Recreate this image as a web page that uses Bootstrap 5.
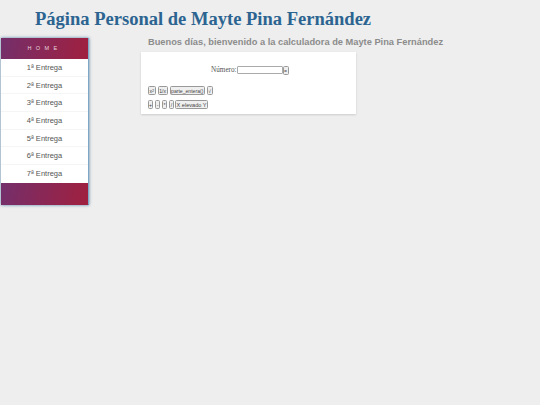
<!DOCTYPE html>
<html lang="es">
<head>
<meta charset="utf-8">
<title>Página Personal de Mayte Pina Fernández</title>
<link rel="stylesheet" href="https://cdn.jsdelivr.net/npm/bootstrap@5.3.0/dist/css/bootstrap.min.css">
<style>
html,body{height:100%}
body{background:#eee;font-family:"Liberation Sans",Arial,sans-serif;overflow:hidden}
.page-title{font-family:"Liberation Serif","Times New Roman",serif;font-weight:700;font-size:18.55px;line-height:22px;color:#2c6491;margin:0;padding:8px 0 0 35px;height:36px}
.side-menu{width:88px;margin:2px 0 0 1px;height:167px;background:#fff;box-shadow:0 0 3px rgba(30,90,140,.75);border-right:1px solid #7fa6c4;border-bottom:1px solid #4f7fa6;flex:none}
.menu-band{background:linear-gradient(100deg,#742f6b,#a0203f);color:#e6d5dd;height:21px;font-size:5.5px;letter-spacing:4.4px;line-height:21px;text-align:center}
.menu-foot{height:22px;background:linear-gradient(100deg,#742f6b,#a0203f)}
.menu-link{display:block;height:17.7px;line-height:17px;text-align:center;font-size:7.5px;color:#555;text-decoration:none;border-bottom:1px solid #f5f5f5}
.menu-link:last-of-type{border-bottom:0}
.main-col{margin-left:52px;width:215px;flex:none}
.greet{font-weight:700;font-size:9.29px;line-height:12px;color:#8c8c8c;padding:0 0 4px 7px;white-space:nowrap;margin:0;height:16px}
.calc-panel{background:#fff;height:62px;box-shadow:0 1px 2px rgba(0,0,0,.15);padding:13px 7px 0;font-size:6px}
.num-row{font-family:"Liberation Serif",serif;font-size:7.2px;color:#555;height:10px;margin-bottom:11px;padding-left:63px}
.num-box{width:46px;height:8px;border:1px solid #aaa;border-radius:1px;background:#fff;padding:0;display:block}
.calc-btn{font-family:"Liberation Sans",sans-serif;font-size:5.1px;line-height:6px;color:#444;background:#efefef;border:1px solid #999;border-radius:1.5px;padding:1px .5px;height:9px;display:block}
.calc-btn.op-key{width:5px;padding:1px 0}
.calc-btn.wide-key{font-size:5.6px;margin-left:-1px}
.calc-row{height:9px;margin-bottom:5px;gap:2px}
sup.pow{font-size:4px;top:-.3em}
</style>
</head>
<body>
<h1 class="page-title">Página Personal de Mayte Pina Fernández</h1>
<div class="d-flex">
  <nav class="side-menu">
    <div class="menu-band">HOME</div>
    <a class="menu-link" href="#">1ª Entrega</a>
    <a class="menu-link" href="#">2ª Entrega</a>
    <a class="menu-link" href="#">3ª Entrega</a>
    <a class="menu-link" href="#">4ª Entrega</a>
    <a class="menu-link" href="#">5ª Entrega</a>
    <a class="menu-link" href="#">6ª Entrega</a>
    <a class="menu-link" href="#">7ª Entrega</a>
    <div class="menu-foot"></div>
  </nav>
  <main class="main-col">
    <p class="greet">Buenos días, bienvenido a la calculadora de Mayte Pina Fernández</p>
    <div class="calc-panel">
      <div class="num-row d-flex align-items-center"><span>Número:</span><input class="num-box" type="text" aria-label="Número"><button class="calc-btn" type="button">=</button></div>
      <div class="calc-row d-flex align-items-center">
        <button class="calc-btn" type="button">x<sup class="pow">2</sup></button>
        <button class="calc-btn" type="button">1/x</button>
        <button class="calc-btn" type="button">parte_entera()</button>
        <button class="calc-btn" type="button">√</button>
      </div>
      <div class="calc-row d-flex align-items-center">
        <button class="calc-btn op-key" type="button">+</button>
        <button class="calc-btn op-key" type="button">-</button>
        <button class="calc-btn op-key" type="button">*</button>
        <button class="calc-btn op-key" type="button">/</button>
        <button class="calc-btn wide-key" type="button">X elevado Y</button>
      </div>
    </div>
  </main>
</div>
<script src="https://cdn.jsdelivr.net/npm/bootstrap@5.3.0/dist/js/bootstrap.bundle.min.js"></script>
</body>
</html>
